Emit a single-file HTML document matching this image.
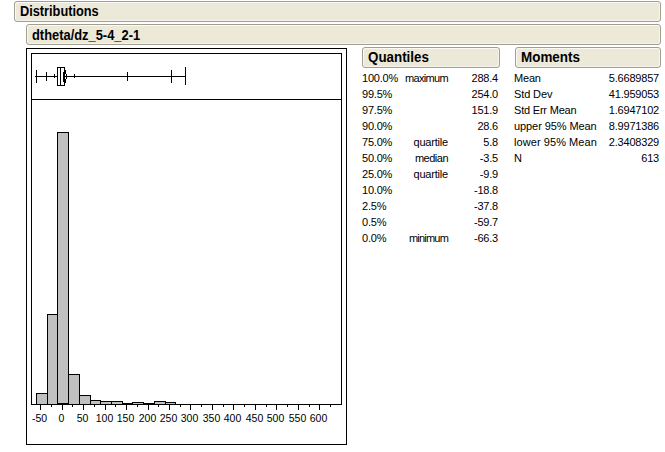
<!DOCTYPE html>
<html><head><meta charset="utf-8"><style>
html,body{margin:0;padding:0;background:#fff;width:665px;height:452px;overflow:hidden;position:relative;font-family:"Liberation Sans",sans-serif;}
.hd{position:absolute;box-sizing:border-box;border:1px solid #a29f92;border-radius:3px;background:#ece9d9;box-shadow:inset 1px 1px 0 #fbfaf5, inset -1px -1px 0 #f6f4ea;font-weight:bold;font-size:14px;line-height:16px;color:#000;}
.hd span{position:absolute;white-space:nowrap;transform-origin:0 0;}
.t{position:absolute;font-size:11px;line-height:16px;white-space:nowrap;color:#000;letter-spacing:-0.2px;}
.r{text-align:right;}
svg{position:absolute;left:0;top:0;}
</style></head><body>
<div class="hd" style="left:14px;top:1px;width:647px;height:21px;"><span style="left:5px;top:1px;transform:scaleX(0.911)">Distributions</span></div>
<div class="hd" style="left:26px;top:24px;width:635px;height:21px;"><span style="left:5px;top:1.6px;transform:scaleX(0.92)">dtheta/dz_5-4_2-1</span></div>
<div class="hd" style="left:362px;top:47px;width:138px;height:21px;"><span style="left:5px;top:1px;transform:scaleX(0.954)">Quantiles</span></div>
<div class="hd" style="left:515px;top:47px;width:146px;height:21px;"><span style="left:5px;top:1px;transform:scaleX(0.96)">Moments</span></div>
<div class="t" style="left:362px;top:70px;">100.0%</div>
<div class="t r" style="right:217px;top:70px;letter-spacing:-0.67px">maximum</div>
<div class="t r" style="right:167px;top:70px;">288.4</div>
<div class="t" style="left:362px;top:86px;">99.5%</div>
<div class="t r" style="right:167px;top:86px;">254.0</div>
<div class="t" style="left:362px;top:102px;">97.5%</div>
<div class="t r" style="right:167px;top:102px;">151.9</div>
<div class="t" style="left:362px;top:118px;">90.0%</div>
<div class="t r" style="right:167px;top:118px;">28.6</div>
<div class="t" style="left:362px;top:134px;">75.0%</div>
<div class="t r" style="right:217px;top:134px;letter-spacing:-0.2px">quartile</div>
<div class="t r" style="right:167px;top:134px;">5.8</div>
<div class="t" style="left:362px;top:150px;">50.0%</div>
<div class="t r" style="right:217px;top:150px;letter-spacing:-0.5px">median</div>
<div class="t r" style="right:167px;top:150px;">-3.5</div>
<div class="t" style="left:362px;top:166px;">25.0%</div>
<div class="t r" style="right:217px;top:166px;letter-spacing:-0.2px">quartile</div>
<div class="t r" style="right:167px;top:166px;">-9.9</div>
<div class="t" style="left:362px;top:182px;">10.0%</div>
<div class="t r" style="right:167px;top:182px;">-18.8</div>
<div class="t" style="left:362px;top:198px;">2.5%</div>
<div class="t r" style="right:167px;top:198px;">-37.8</div>
<div class="t" style="left:362px;top:214px;">0.5%</div>
<div class="t r" style="right:167px;top:214px;">-59.7</div>
<div class="t" style="left:362px;top:230px;">0.0%</div>
<div class="t r" style="right:217px;top:230px;letter-spacing:-0.8px">minimum</div>
<div class="t r" style="right:167px;top:230px;">-66.3</div>
<div class="t" style="left:514px;top:70px;letter-spacing:-0.2px">Mean</div>
<div class="t r" style="right:6px;top:70px;">5.6689857</div>
<div class="t" style="left:514px;top:86px;letter-spacing:-0.12px">Std Dev</div>
<div class="t r" style="right:6px;top:86px;">41.959053</div>
<div class="t" style="left:514px;top:102px;letter-spacing:-0.2px">Std Err Mean</div>
<div class="t r" style="right:6px;top:102px;">1.6947102</div>
<div class="t" style="left:514px;top:118px;letter-spacing:-0.08px">upper 95% Mean</div>
<div class="t r" style="right:6px;top:118px;">8.9971386</div>
<div class="t" style="left:514px;top:134px;letter-spacing:0.07px">lower 95% Mean</div>
<div class="t r" style="right:6px;top:134px;">2.3408329</div>
<div class="t" style="left:514px;top:150px;letter-spacing:-0.2px">N</div>
<div class="t r" style="right:6px;top:150px;">613</div>
<svg width="665" height="452" viewBox="0 0 665 452" font-family="Liberation Sans" shape-rendering="crispEdges">
<rect x="26.5" y="48.5" width="320" height="396" fill="none" stroke="#000"/><path d="M31.5 404V53.5H341.5V404" fill="none" stroke="#000"/><path d="M31 99.5H342" stroke="#000"/><rect x="36.5" y="393.5" width="11" height="11" fill="#c0c0c0" stroke="#000"/><rect x="47.5" y="314.5" width="10" height="90" fill="#c0c0c0" stroke="#000"/><rect x="57.5" y="132.5" width="11" height="272" fill="#c0c0c0" stroke="#000"/><rect x="68.5" y="374.5" width="11" height="30" fill="#c0c0c0" stroke="#000"/><rect x="79.5" y="395.5" width="11" height="9" fill="#c0c0c0" stroke="#000"/><rect x="90.5" y="400.5" width="10" height="4" fill="#c0c0c0" stroke="#000"/><rect x="100.5" y="401.5" width="11" height="3" fill="#c0c0c0" stroke="#000"/><rect x="111.5" y="401.5" width="11" height="3" fill="#c0c0c0" stroke="#000"/><rect x="122.5" y="403.5" width="10" height="1" fill="#c0c0c0" stroke="#000"/><rect x="132.5" y="402.5" width="11" height="2" fill="#c0c0c0" stroke="#000"/><rect x="143.5" y="403.5" width="11" height="1" fill="#c0c0c0" stroke="#000"/><rect x="154.5" y="401.5" width="11" height="3" fill="#c0c0c0" stroke="#000"/><rect x="165.5" y="402.5" width="10" height="2" fill="#c0c0c0" stroke="#000"/><path d="M57 403.5H69" stroke="#000"/><path d="M31 404.5H342" stroke="#000"/><path d="M40.5 404V410" stroke="#000"/><path d="M51.5 404V407" stroke="#000"/><path d="M62.5 404V410" stroke="#000"/><path d="M72.5 404V407" stroke="#000"/><path d="M83.5 404V410" stroke="#000"/><path d="M94.5 404V407" stroke="#000"/><path d="M105.5 404V410" stroke="#000"/><path d="M115.5 404V407" stroke="#000"/><path d="M126.5 404V410" stroke="#000"/><path d="M137.5 404V407" stroke="#000"/><path d="M148.5 404V410" stroke="#000"/><path d="M158.5 404V407" stroke="#000"/><path d="M169.5 404V410" stroke="#000"/><path d="M180.5 404V407" stroke="#000"/><path d="M190.5 404V410" stroke="#000"/><path d="M201.5 404V407" stroke="#000"/><path d="M212.5 404V410" stroke="#000"/><path d="M223.5 404V407" stroke="#000"/><path d="M233.5 404V410" stroke="#000"/><path d="M244.5 404V407" stroke="#000"/><path d="M255.5 404V410" stroke="#000"/><path d="M266.5 404V407" stroke="#000"/><path d="M276.5 404V410" stroke="#000"/><path d="M287.5 404V407" stroke="#000"/><path d="M298.5 404V410" stroke="#000"/><path d="M309.5 404V407" stroke="#000"/><path d="M319.5 404V410" stroke="#000"/><path d="M330.5 404V407" stroke="#000"/><text x="39.5" y="421.5" text-anchor="middle" font-size="10.5">-50</text><text x="61.5" y="421.5" text-anchor="middle" font-size="10.5">0</text><text x="82.5" y="421.5" text-anchor="middle" font-size="10.5">50</text><text x="104.5" y="421.5" text-anchor="middle" font-size="10.5">100</text><text x="125.5" y="421.5" text-anchor="middle" font-size="10.5">150</text><text x="147.5" y="421.5" text-anchor="middle" font-size="10.5">200</text><text x="168.5" y="421.5" text-anchor="middle" font-size="10.5">250</text><text x="189.5" y="421.5" text-anchor="middle" font-size="10.5">300</text><text x="211.5" y="421.5" text-anchor="middle" font-size="10.5">350</text><text x="232.5" y="421.5" text-anchor="middle" font-size="10.5">400</text><text x="254.5" y="421.5" text-anchor="middle" font-size="10.5">450</text><text x="275.5" y="421.5" text-anchor="middle" font-size="10.5">500</text><text x="297.5" y="421.5" text-anchor="middle" font-size="10.5">550</text><text x="318.5" y="421.5" text-anchor="middle" font-size="10.5">600</text><path d="M35 76.5H186" stroke="#000"/><path d="M185.5 67V85" stroke="#000"/><path d="M171.5 70V83" stroke="#000"/><path d="M127.5 72V81" stroke="#000"/><path d="M74.5 74V78" stroke="#000"/><path d="M54.5 74V78" stroke="#000"/><path d="M46.5 72V81" stroke="#000"/><path d="M36.5 70V83" stroke="#000"/><rect x="57.5" y="67.5" width="7" height="18" fill="#fff" stroke="#000"/><path d="M60.5 67V86" stroke="#000"/><rect x="63" y="72" width="1" height="10" fill="#000"/><rect x="65" y="70" width="1" height="4" fill="#000"/><rect x="65" y="79" width="1" height="4" fill="#000"/><rect x="65" y="76" width="1" height="1" fill="#000"/><rect x="66" y="74" width="1" height="5" fill="#000"/>
</svg>
</body></html>
